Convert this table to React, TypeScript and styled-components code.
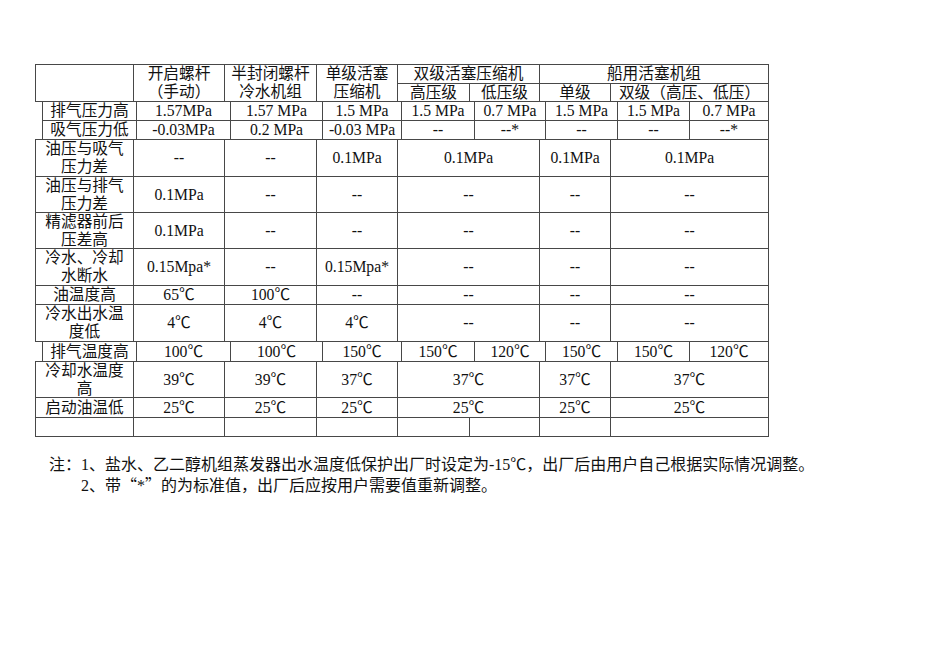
import React from "react";
import styled, { createGlobalStyle } from "styled-components";

const Global = createGlobalStyle`
  html, body { margin: 0; padding: 0; background: #ffffff; }
  body {
    font-family: "Liberation Serif", "Noto Sans CJK SC", serif;
    color: #111111;
  }
`;

const Page = styled.div`
  width: 950px;
  height: 672px;
  box-sizing: border-box;
  padding: 64px 0 0 35px;
  background: #ffffff;
`;

const Table = styled.div`
  display: flex;
  flex-direction: column;
  width: 734px;
  font-size: 15.7px;
  line-height: 18px;
`;

const Row = styled.div<{ $h: number; $indent: number }>`
  display: flex;
  height: ${(p) => p.$h + 1}px;
  margin-bottom: -1px;
  margin-left: ${(p) => p.$indent}px;
`;

const Cell = styled.div<{ $w: number }>`
  box-sizing: border-box;
  flex: none;
  width: ${(p) => p.$w + 1}px;
  margin-right: -1px;
  border: 1px solid #484848;
  display: flex;
  flex-direction: column;
  align-items: center;
  justify-content: center;
  text-align: center;
  white-space: nowrap;
`;

const Group = styled.div<{ $w: number }>`
  flex: none;
  width: ${(p) => p.$w + 1}px;
  margin-right: -1px;
  display: flex;
  flex-direction: column;
`;

const SubRow = styled.div<{ $h: number }>`
  display: flex;
  height: ${(p) => p.$h + 1}px;
  margin-bottom: -1px;
`;

const Line = styled.span`
  display: block;
  height: 18px;
`;

const Notes = styled.div`
  margin-top: 18px;
  padding-left: 14px;
  font-size: 16px;
  line-height: 21px;
`;

const NoteLine = styled.div<{ $pad: number }>`
  padding-left: ${(p) => p.$pad}px;
  white-space: nowrap;
`;

const Cjk = styled.span`
  font-family: "Noto Sans CJK SC", sans-serif;
  line-height: 1;
`;

type CellText = string | string[];
type RowDef = { lines: number[]; h: number; cells: CellText[] };

const STD = [35, 133, 224, 316, 397, 539, 610, 768];
const IND = [42, 136, 230, 322, 401, 474, 545, 617, 689, 768];
const LAST = [35, 133, 224, 316, 397, 469, 539, 610, 768];

const rows: RowDef[] = [
  { lines: IND, h: 19, cells: ["排气压力高", "1.57MPa", "1.57 MPa", "1.5 MPa", "1.5 MPa", "0.7 MPa", "1.5 MPa", "1.5 MPa", "0.7 MPa"] },
  { lines: IND, h: 19, cells: ["吸气压力低", "-0.03MPa", "0.2 MPa", "-0.03 MPa", "--", "--*", "--", "--", "--*"] },
  { lines: STD, h: 37, cells: [["油压与吸气", "压力差"], "--", "--", "0.1MPa", "0.1MPa", "0.1MPa", "0.1MPa"] },
  { lines: STD, h: 36, cells: [["油压与排气", "压力差"], "0.1MPa", "--", "--", "--", "--", "--"] },
  { lines: STD, h: 36, cells: [["精滤器前后", "压差高"], "0.1MPa", "--", "--", "--", "--", "--"] },
  { lines: STD, h: 37, cells: [["冷水、冷却", "水断水"], "0.15Mpa*", "--", "0.15Mpa*", "--", "--", "--"] },
  { lines: STD, h: 19, cells: ["油温度高", "65℃", "100℃", "--", "--", "--", "--"] },
  { lines: STD, h: 37, cells: [["冷水出水温", "度低"], "4℃", "4℃", "4℃", "--", "--", "--"] },
  { lines: IND, h: 20, cells: ["排气温度高", "100℃", "100℃", "150℃", "150℃", "120℃", "150℃", "150℃", "120℃"] },
  { lines: STD, h: 36, cells: [["冷却水温度", "高"], "39℃", "39℃", "37℃", "37℃", "37℃", "37℃"] },
  { lines: STD, h: 20, cells: ["启动油温低", "25℃", "25℃", "25℃", "25℃", "25℃", "25℃"] },
  { lines: LAST, h: 19, cells: ["", "", "", "", "", "", "", ""] },
];

const withDegree = (s: string) => {
  if (!s.includes("℃")) return s;
  const parts = s.split("℃");
  return parts.map((p, i) => (
    <React.Fragment key={i}>
      {p}
      {i < parts.length - 1 && <Cjk>℃</Cjk>}
    </React.Fragment>
  ));
};

const renderText = (t: CellText) =>
  Array.isArray(t) ? (
    t.map((s, i) => <Line key={i}>{s}</Line>)
  ) : t === "" ? null : (
    <Line>{withDegree(t)}</Line>
  );

const Header = () => (
  <Row $h={37} $indent={0}>
    <Cell $w={133 - 35} />
    <Cell $w={224 - 133}>
      <Line>开启螺杆</Line>
      <Line>（手动）</Line>
    </Cell>
    <Cell $w={316 - 224}>
      <Line>半封闭螺杆</Line>
      <Line>冷水机组</Line>
    </Cell>
    <Cell $w={397 - 316}>
      <Line>单级活塞</Line>
      <Line>压缩机</Line>
    </Cell>
    <Group $w={539 - 397}>
      <SubRow $h={19}>
        <Cell $w={539 - 397}>双级活塞压缩机</Cell>
      </SubRow>
      <SubRow $h={18}>
        <Cell $w={469 - 397}>高压级</Cell>
        <Cell $w={539 - 469}>低压级</Cell>
      </SubRow>
    </Group>
    <Group $w={768 - 539}>
      <SubRow $h={19}>
        <Cell $w={768 - 539}>船用活塞机组</Cell>
      </SubRow>
      <SubRow $h={18}>
        <Cell $w={610 - 539}>单级</Cell>
        <Cell $w={768 - 610}>双级（高压、低压）</Cell>
      </SubRow>
    </Group>
  </Row>
);

export default function App() {
  return (
    <Page>
      <Global />
      <Table>
        <Header />
        {rows.map((r, ri) => (
          <Row key={ri} $h={r.h} $indent={r.lines[0] - 35}>
            {r.cells.map((c, ci) => (
              <Cell key={ci} $w={r.lines[ci + 1] - r.lines[ci]}>
                {renderText(c)}
              </Cell>
            ))}
          </Row>
        ))}
      </Table>
      <Notes>
        <NoteLine $pad={0}>
          注：1、盐水、乙二醇机组蒸发器出水温度低保护出厂时设定为-15<Cjk>℃</Cjk>，出厂后由用户自己根据实际情况调整。
        </NoteLine>
        <NoteLine $pad={32}>
          2、带<Cjk>“</Cjk>*<Cjk>”</Cjk>的为标准值，出厂后应按用户需要值重新调整。
        </NoteLine>
      </Notes>
    </Page>
  );
}
